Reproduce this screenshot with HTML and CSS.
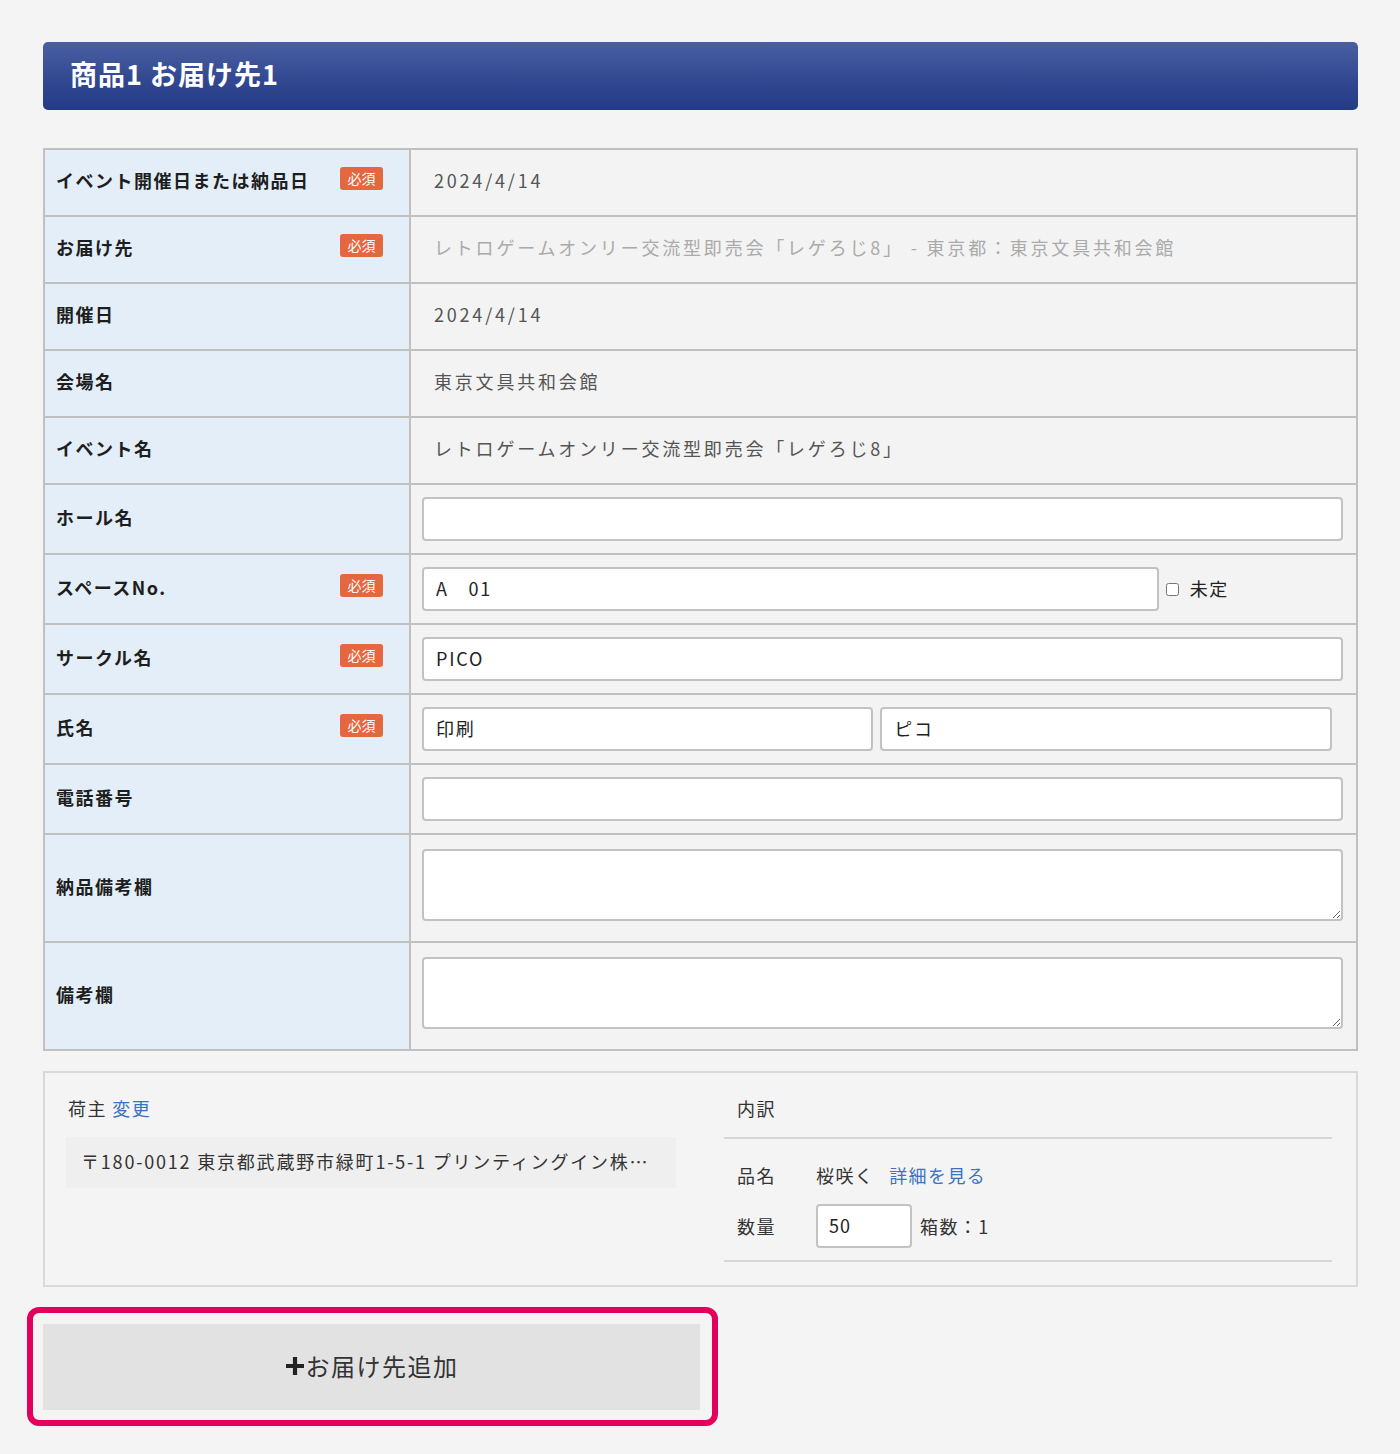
FILE: index.html
```html
<!DOCTYPE html>
<html lang="ja">
<head>
<meta charset="utf-8">
<title>お届け先</title>
<link rel="stylesheet" href="styles.css">
</head>
<body>
<div class="page">
  <h2 class="section-title">商品1 お届け先1</h2>

  <table class="form-table">
    <tr class="row-text">
      <th><div class="th-inner"><span>イベント開催日または納品日</span><span class="req">必須</span></div></th>
      <td class="val">2024/4/14</td>
    </tr>
    <tr class="row-text">
      <th><div class="th-inner"><span>お届け先</span><span class="req">必須</span></div></th>
      <td class="val val-muted">レトロゲームオンリー交流型即売会「レゲろじ8」 - 東京都：東京文具共和会館</td>
    </tr>
    <tr class="row-text">
      <th><div class="th-inner"><span>開催日</span></div></th>
      <td class="val">2024/4/14</td>
    </tr>
    <tr class="row-text">
      <th><div class="th-inner"><span>会場名</span></div></th>
      <td class="val">東京文具共和会館</td>
    </tr>
    <tr class="row-text">
      <th><div class="th-inner"><span>イベント名</span></div></th>
      <td class="val">レトロゲームオンリー交流型即売会「レゲろじ8」</td>
    </tr>
    <tr class="row-input">
      <th><div class="th-inner"><span>ホール名</span></div></th>
      <td class="field"><input class="text-input" type="text" value=""></td>
    </tr>
    <tr class="row-input">
      <th><div class="th-inner"><span>スペースNo.</span><span class="req">必須</span></div></th>
      <td class="field">
        <div class="space-line">
          <input class="text-input space-input" type="text" value="A　01">
          <label class="undecided"><input type="checkbox" class="chk"><span>未定</span></label>
        </div>
      </td>
    </tr>
    <tr class="row-input">
      <th><div class="th-inner"><span>サークル名</span><span class="req">必須</span></div></th>
      <td class="field"><input class="text-input" type="text" value="PICO"></td>
    </tr>
    <tr class="row-input">
      <th><div class="th-inner"><span>氏名</span><span class="req">必須</span></div></th>
      <td class="field">
        <div class="name-line">
          <input class="text-input name-input" type="text" value="印刷">
          <input class="text-input name-input" type="text" value="ピコ">
        </div>
      </td>
    </tr>
    <tr class="row-input">
      <th><div class="th-inner"><span>電話番号</span></div></th>
      <td class="field"><input class="text-input" type="text" value=""></td>
    </tr>
    <tr class="row-area">
      <th><div class="th-inner"><span>納品備考欄</span></div></th>
      <td class="field field-area"><textarea class="text-area"></textarea></td>
    </tr>
    <tr class="row-area">
      <th><div class="th-inner"><span>備考欄</span></div></th>
      <td class="field field-area"><textarea class="text-area"></textarea></td>
    </tr>
  </table>

  <div class="summary">
    <div class="shipper">
      <div class="shipper-head">荷主 <a class="link">変更</a></div>
      <div class="shipper-addr">〒180-0012 東京都武蔵野市緑町1-5-1 プリンティングイン株…</div>
    </div>
    <div class="breakdown">
      <div class="bd-head">内訳</div>
      <div class="bd-body">
        <div class="bd-row">
          <span class="bd-label">品名</span>
          <span>桜咲く</span><a class="link bd-link">詳細を見る</a>
        </div>
        <div class="bd-row">
          <span class="bd-label">数量</span>
          <input class="qty-input" type="text" value="50">
          <span class="boxes">箱数：1</span>
        </div>
      </div>
    </div>
  </div>

  <div class="add-highlight">
    <button class="add-btn" type="button"><svg class="plus" width="20" height="20" viewBox="0 0 20 20"><path d="M10 1v18M1 10h18" stroke="#222" stroke-width="4.2" fill="none"/></svg><span>お届け先追加</span></button>
  </div>
</div>
</body>
</html>
```

FILE: styles.css
```css
* { box-sizing: border-box; }

html, body {
  margin: 0;
  padding: 0;
  background: #f4f4f4;
}

body {
  font-family: "Noto Sans CJK JP", "Noto Sans", sans-serif;
  color: #333;
}

.page {
  padding: 42px 42px 28px 43px;
  width: 1400px;
}

.section-title {
  margin: 0 0 38px;
  height: 68px;
  display: flex;
  align-items: center;
  padding: 0 0 5px 27px;
  border-radius: 5px;
  background: linear-gradient(to bottom, #4b5fa1 0%, #344b93 50%, #233a85 100%);
  color: #fff;
  font-size: 27px;
  font-weight: bold;
  letter-spacing: 1px;
}

.form-table {
  width: 1315px;
  border-collapse: collapse;
  border: 2px solid #c0c0c0;
}

.form-table th,
.form-table td {
  border: 2px solid #c0c0c0;
  vertical-align: middle;
}

.form-table th {
  width: 366px;
  background: #e3eef9;
  text-align: left;
  padding: 0 26px 5px 11px;
  font-size: 18px;
  font-weight: bold;
  color: #1e1e1e;
  letter-spacing: 1.5px;
}

.th-inner {
  display: flex;
  align-items: center;
  justify-content: space-between;
}

.req {
  display: inline-flex;
  align-items: center;
  justify-content: center;
  width: 43px;
  height: 23px;
  border-radius: 3px;
  background: #e4673f;
  color: #fff;
  font-size: 14px;
  font-weight: normal;
  letter-spacing: 0;
  padding-bottom: 2px;
  margin-top: -3px;
}

.form-table td {
  background: #f3f3f3;
}

.row-text th,
.row-text td {
  height: 67px;
}

.row-input th {
  padding-bottom: 4px;
}

.val {
  padding: 0 20px 6px 23px;
  font-size: 18px;
  letter-spacing: 2.8px;
  color: #555;
}

.val-muted {
  color: #aaa;
}

.field {
  padding: 12px 13px 12px 11px;
}

.field-area {
  padding: 14px 13px 20px 11px;
}

.text-input {
  display: block;
  width: 100%;
  height: 44px;
  border: 2px solid #c2c2c2;
  border-radius: 4px;
  background: #fff;
  padding: 0 12px 3px;
  font-family: "Noto Sans CJK JP", "Noto Sans", sans-serif;
  font-size: 18px;
  letter-spacing: 1.8px;
  color: #222;
  outline: none;
}

.space-line {
  display: flex;
  align-items: center;
}

.space-input {
  width: 80%;
  flex: none;
}

.undecided {
  display: flex;
  align-items: center;
  margin-left: 6px;
  font-size: 18px;
  letter-spacing: 1.4px;
  color: #222;
  padding-bottom: 3px;
}

.chk {
  width: 13px;
  height: 13px;
  margin: 3px 11px 0 1px;
}

.name-line {
  display: flex;
  gap: 7px;
}

.name-input {
  width: 49%;
  flex: none;
}

.text-area {
  display: block;
  width: 100%;
  height: 72px;
  border: 2px solid #c2c2c2;
  border-radius: 4px;
  background: #fff;
  font-family: "Noto Sans CJK JP", "Noto Sans", sans-serif;
  font-size: 18px;
  outline: none;
}

.summary {
  margin-top: 20px;
  border: 2px solid #d9d9d9;
  padding: 23px 24px 23px 21px;
  display: grid;
  grid-template-columns: 610px 608px;
  column-gap: 48px;
  font-size: 18px;
  letter-spacing: 1.4px;
  color: #333;
}

.link {
  color: #3a72c4;
  text-decoration: none;
  cursor: pointer;
}

.shipper-head {
  line-height: 24px;
  padding-left: 2px;
  margin-bottom: 17px;
}

.shipper-addr {
  height: 51px;
  display: flex;
  align-items: center;
  padding: 0 0 3px 15px;
  background: #efefef;
  white-space: nowrap;
  overflow: hidden;
  letter-spacing: 1.8px;
}

.bd-head {
  line-height: 24px;
  padding: 0 13px 17px;
  border-bottom: 2px solid #d6d6d6;
}

.bd-body {
  padding: 14px 13px 12px;
  border-bottom: 2px solid #d6d6d6;
  display: flex;
  flex-direction: column;
  gap: 7px;
}

.bd-row {
  height: 44px;
  display: flex;
  align-items: center;
}

.bd-label {
  width: 79px;
  flex: none;
}

.bd-link {
  margin-left: 15px;
}

.qty-input {
  width: 96px;
  height: 44px;
  border: 2px solid #c2c2c2;
  border-radius: 4px;
  background: #fff;
  padding: 0 11px 2px;
  font-family: "Noto Sans CJK JP", "Noto Sans", sans-serif;
  font-size: 18px;
  letter-spacing: 1px;
  color: #222;
  outline: none;
}

.boxes {
  margin-left: 8px;
}

.add-highlight {
  margin: 20px 0 0 -16px;
  width: 691px;
  border: 6px solid #e4005a;
  border-radius: 12px;
  padding: 11px 12px 10px 10px;
}

.add-btn {
  width: 657px;
  height: 86px;
  border: none;
  background: #e2e2e2;
  display: flex;
  align-items: center;
  justify-content: center;
  font-family: "Noto Sans CJK JP", "Noto Sans", sans-serif;
  font-size: 24px;
  letter-spacing: 1.5px;
  color: #333;
  cursor: pointer;
  padding: 0 0 3px;
}

.plus {
  margin-right: 1px;
}
```
